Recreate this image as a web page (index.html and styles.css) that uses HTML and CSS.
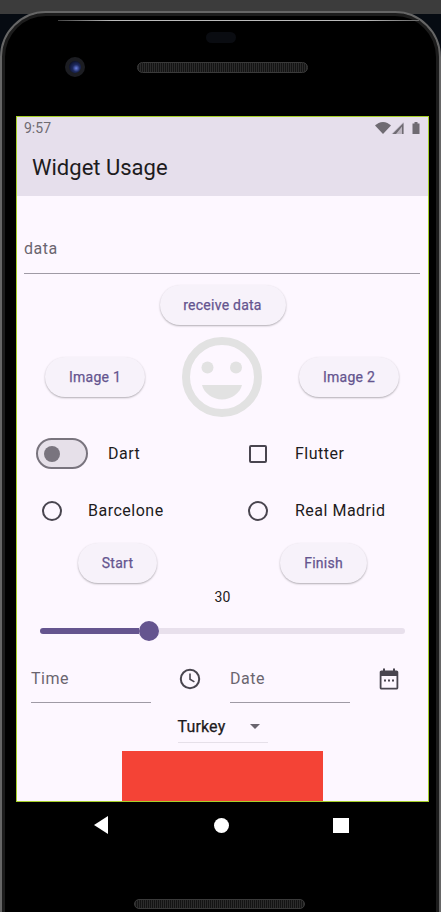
FILE: index.html

```html
<!DOCTYPE html>
<html lang="en">
<head>
<meta charset="UTF-8">
<meta name="viewport" content="width=device-width, initial-scale=1.0">
<title>Widget Usage</title>
<link rel="stylesheet" href="styles.css">
</head>
<body>
<div class="window-bar"></div>
<div class="phone">
    <div class="phone-top">
        <div class="glass-line"></div>
        <div class="sensor"></div>
        <div class="camera-row">
            <div class="camera"></div>
            <div class="speaker"></div>
        </div>
    </div>

    <div class="screen">
        <header class="app-header">
            <div class="status-bar">
                <span class="clock-text">9:57</span>
                <svg class="status-icons" width="46" height="14" viewBox="0 0 46 14">
                    <path d="M0 4.600C2 2.600 5 1 8 1s6 1.600 8 3.600L8 13z" fill="#6f6b72"/>
                    <path d="M16.500 13L28.500 1v12z" fill="#6f6b72" opacity="0.35"/>
                    <path d="M17.500 13L28.500 2v11h-1.500V5.500L21 13z" fill="#6f6b72"/>
                    <path d="M37.500 2.500h2V1h3v1.500h2V13h-7z" fill="#6f6b72"/>
                </svg>
            </div>
            <h1 class="app-title">Widget Usage</h1>
        </header>

        <main class="content">
            <div class="field field-data"><span>data</span></div>

            <div class="center-row row-receive">
                <button class="btn btn-receive">receive data</button>
            </div>

            <div class="image-row">
                <button class="btn btn-image">Image 1</button>
                <svg class="smiley" width="80" height="80" viewBox="0 0 80 80">
                    <circle cx="40" cy="40" r="36" fill="none" stroke="#e2e2e2" stroke-width="8"/>
                    <circle cx="25.500" cy="30.500" r="6" fill="#e2e2e2"/>
                    <circle cx="54" cy="30.500" r="6" fill="#e2e2e2"/>
                    <path d="M20 48h40c-2 8-10.500 14.500-20 14.500S22 56 20 48z" fill="#e2e2e2"/>
                </svg>
                <button class="btn btn-image">Image 2</button>
            </div>

            <div class="choice-row row-dart">
                <div class="choice choice-switch">
                    <div class="switch"><div class="switch-thumb"></div></div>
                    <span>Dart</span>
                </div>
                <div class="choice choice-right">
                    <div class="checkbox"></div>
                    <span>Flutter</span>
                </div>
            </div>

            <div class="choice-row row-team">
                <div class="choice choice-radio">
                    <div class="radio"></div>
                    <span>Barcelone</span>
                </div>
                <div class="choice choice-right">
                    <div class="radio"></div>
                    <span>Real Madrid</span>
                </div>
            </div>

            <div class="progress-row">
                <button class="btn btn-start">Start</button>
                <button class="btn btn-finish">Finish</button>
            </div>

            <div class="slider-value">30</div>
            <div class="slider">
                <div class="slider-fill"></div>
                <div class="slider-thumb"></div>
                <div class="slider-rest"></div>
            </div>

            <div class="picker-row">
                <div class="field field-picker"><span>Time</span></div>
                <svg class="picker-clock" width="24" height="24" viewBox="0 0 24 24">
                    <circle cx="12" cy="12" r="9.200" fill="none" stroke="#49454f" stroke-width="2"/>
                    <path d="M12 6.500v5.800l4.400 2.600" fill="none" stroke="#49454f" stroke-width="1.600"/>
                </svg>
                <div class="field field-picker"><span>Date</span></div>
                <svg class="picker-calendar" width="24" height="24" viewBox="0 0 24 24">
                    <path d="M6 1.500h2v2h8v-2h2v2h1.500c1 0 1.800.8 1.800 1.800v15.400c0 1-.8 1.800-1.800 1.800h-15c-1 0-1.800-.8-1.800-1.800V5.300c0-1 .8-1.800 1.800-1.800H6zM4.500 9v11.700h15V9z" fill="#49454f"/>
                    <path d="M7 12.500h2v2H7zM11 12.500h2v2h-2zM15 12.500h2v2h-2z" fill="#49454f"/>
                </svg>
            </div>

            <div class="center-row">
                <div class="dropdown">
                    <span>Turkey</span>
                    <div class="dropdown-arrow"></div>
                </div>
            </div>

            <div class="red-box"></div>
        </main>
    </div>

    <nav class="nav-bar">
        <div class="nav-back"></div>
        <div class="nav-home"></div>
        <div class="nav-recent"></div>
    </nav>
    <div class="speaker speaker-bottom"></div>
</div>
</body>
</html>
```

FILE: styles.css

```css
* {
    box-sizing: border-box;
}

html, body {
    height: 912px;
    overflow: hidden;
}

body {
    margin: 0;
    background-color: #060b12;
    font-family: Roboto, "Liberation Sans", sans-serif;
}

.window-bar {
    height: 14px;
    background-color: #3c3c3c;
}

.phone {
    margin-top: -3px;
    height: 930px;
    background-color: #000;
    border: 2px solid #666;
    border-radius: 46px 46px 0 0;
    box-shadow: inset 0 0 0 3px #1c1c1c;
}

.phone-top {
    height: 103px;
    padding-top: 7px;
}

.glass-line {
    height: 1px;
    margin: 0 20px 0 56px;
    background: linear-gradient(90deg, #444, #bbb 15%, #bbb 85%, #666);
}

.sensor {
    width: 30px;
    height: 11px;
    margin: 11px auto 0;
    background-color: #0a0c11;
    border-radius: 6px;
}

.camera-row {
    display: flex;
    align-items: center;
    margin-top: 14px;
    padding-left: 63px;
}

.camera {
    width: 20px;
    height: 20px;
    border-radius: 50%;
    border: 4px solid #1c1d22;
    background: radial-gradient(circle at 60% 60%, #6a7fe0 0, #1e2a5e 35%, #0b0f22 80%);
}

.speaker {
    width: 171px;
    height: 11px;
    margin-left: 52px;
    background: repeating-linear-gradient(90deg, #2c2c2c 0, #2c2c2c 1px, #141414 1px, #141414 2px);
    border: 1px solid #3a3a3a;
    border-radius: 6px;
}

.screen {
    width: 413px;
    height: 686px;
    margin-left: 14px;
    overflow: hidden;
    background-color: #fdf7ff;
    border: 1px solid #a6d029;
}

.app-header {
    height: 79px;
    background-color: #e6dfec;
}

.status-bar {
    display: flex;
    justify-content: space-between;
    align-items: center;
    height: 21px;
    padding: 0 7px;
}

.clock-text {
    font-size: 14px;
    color: #6f6b72;
}

.app-title {
    margin: 16px 0 0 15px;
    font-size: 22px;
    font-weight: 400;
    line-height: 28px;
    color: #1d1b20;
}

.content {
    height: 606px;
    overflow: hidden;
}

.field {
    display: flex;
    align-items: center;
    border-bottom: 1px solid #9f9aa5;
    font-size: 16px;
    letter-spacing: 0.5px;
    color: #6a656f;
}

.field-data {
    height: 48px;
    margin: 30px 8px 0 7px;
    padding-bottom: 2px;
}

.btn {
    height: 40px;
    padding: 0;
    border: 0;
    border-radius: 20px;
    background-color: #f7f2fa;
    box-shadow: 0 1px 2px rgba(0, 0, 0, 0.3);
    font-family: inherit;
    font-size: 14px;
    font-weight: 400;
    letter-spacing: 0.25px;
    -webkit-text-stroke: 0.25px #65558f;
    color: #65558f;
}

.center-row {
    display: flex;
    justify-content: center;
}

.row-receive {
    margin-top: 11px;
}

.btn-receive {
    width: 126px;
}

.image-row {
    display: flex;
    justify-content: space-between;
    align-items: center;
    height: 80px;
    margin-top: 12px;
    padding: 0 29px 0 28px;
}

.btn-image {
    width: 100px;
}

.choice-row {
    display: grid;
    grid-template-columns: 205px 1fr;
    font-size: 16px;
    letter-spacing: 0.5px;
    color: #1d1b20;
}

.row-dart {
    margin-top: 21px;
}

.row-team {
    margin-top: 26px;
}

.choice {
    display: flex;
    align-items: center;
    height: 31px;
}

.choice-switch {
    padding-left: 19px;
    gap: 20px;
}

.choice-radio {
    padding-left: 25px;
    gap: 26px;
}

.choice-right {
    padding-left: 26px;
    gap: 27px;
}

.switch {
    width: 52px;
    height: 31px;
    padding-left: 6px;
    display: flex;
    align-items: center;
    background-color: #e6e0e9;
    border: 2px solid #79747e;
    border-radius: 16px;
}

.switch-thumb {
    width: 16px;
    height: 16px;
    border-radius: 50%;
    background-color: #79747e;
}

.checkbox {
    width: 18px;
    height: 18px;
    margin-left: 1px;
    margin-right: 1px;
    border: 2px solid #49454f;
    border-radius: 2px;
}

.radio {
    width: 20px;
    height: 20px;
    border: 2px solid #49454f;
    border-radius: 50%;
}

.progress-row {
    display: flex;
    margin-top: 17px;
}

.btn-start {
    width: 79px;
    margin-left: 61px;
}

.btn-finish {
    width: 87px;
    margin-left: 123px;
}

.slider-value {
    margin-top: 4px;
    text-align: center;
    font-size: 14px;
    line-height: 20px;
    letter-spacing: 0.25px;
    color: #1d1b20;
}

.slider {
    display: flex;
    align-items: center;
    height: 20px;
    margin: 14px 23px 0 23px;
}

.slider-fill {
    width: 99px;
    height: 6px;
    background-color: #65558f;
    border-radius: 3px 0 0 3px;
}

.slider-thumb {
    flex: none;
    width: 20px;
    height: 20px;
    background-color: #65558f;
    border-radius: 50%;
}

.slider-rest {
    flex: 1;
    height: 6px;
    background-color: #e8e0ec;
    border-radius: 0 3px 3px 0;
}

.picker-row {
    display: flex;
    align-items: center;
    height: 48px;
    margin-top: 14px;
    padding-left: 14px;
}

.field-picker {
    width: 120px;
    height: 48px;
}

.picker-clock {
    flex: none;
    margin: 0 28px 0 27px;
}

.picker-calendar {
    flex: none;
    margin-left: 27px;
}

.dropdown {
    display: flex;
    align-items: center;
    justify-content: space-between;
    width: 90px;
    height: 32px;
    margin-top: 8px;
    padding: 0 8px 0 0;
    border-bottom: 1px solid #e6e0e9;
    font-size: 16px;
    letter-spacing: 0.15px;
    -webkit-text-stroke: 0.25px #1d1b20;
    color: #1d1b20;
}

.dropdown-arrow {
    width: 0;
    height: 0;
    border-left: 5px solid transparent;
    border-right: 5px solid transparent;
    border-top: 5px solid #6a656f;
}

.red-box {
    width: 201px;
    height: 60px;
    margin: 8px auto 0;
    background-color: #f44336;
}

.nav-bar {
    display: flex;
    align-items: center;
    height: 46px;
    margin-left: 14px;
    width: 413px;
}

.nav-back {
    width: 0;
    height: 0;
    margin-left: 78px;
    border-top: 9px solid transparent;
    border-bottom: 9px solid transparent;
    border-right: 14px solid #fff;
}

.nav-home {
    width: 15px;
    height: 15px;
    margin-left: 106px;
    background-color: #fff;
    border-radius: 50%;
}

.nav-recent {
    width: 16px;
    height: 15px;
    margin-left: 104px;
    background-color: #fff;
}

.speaker-bottom {
    margin: 51px 0 0 132px;
    height: 10px;
}
```
